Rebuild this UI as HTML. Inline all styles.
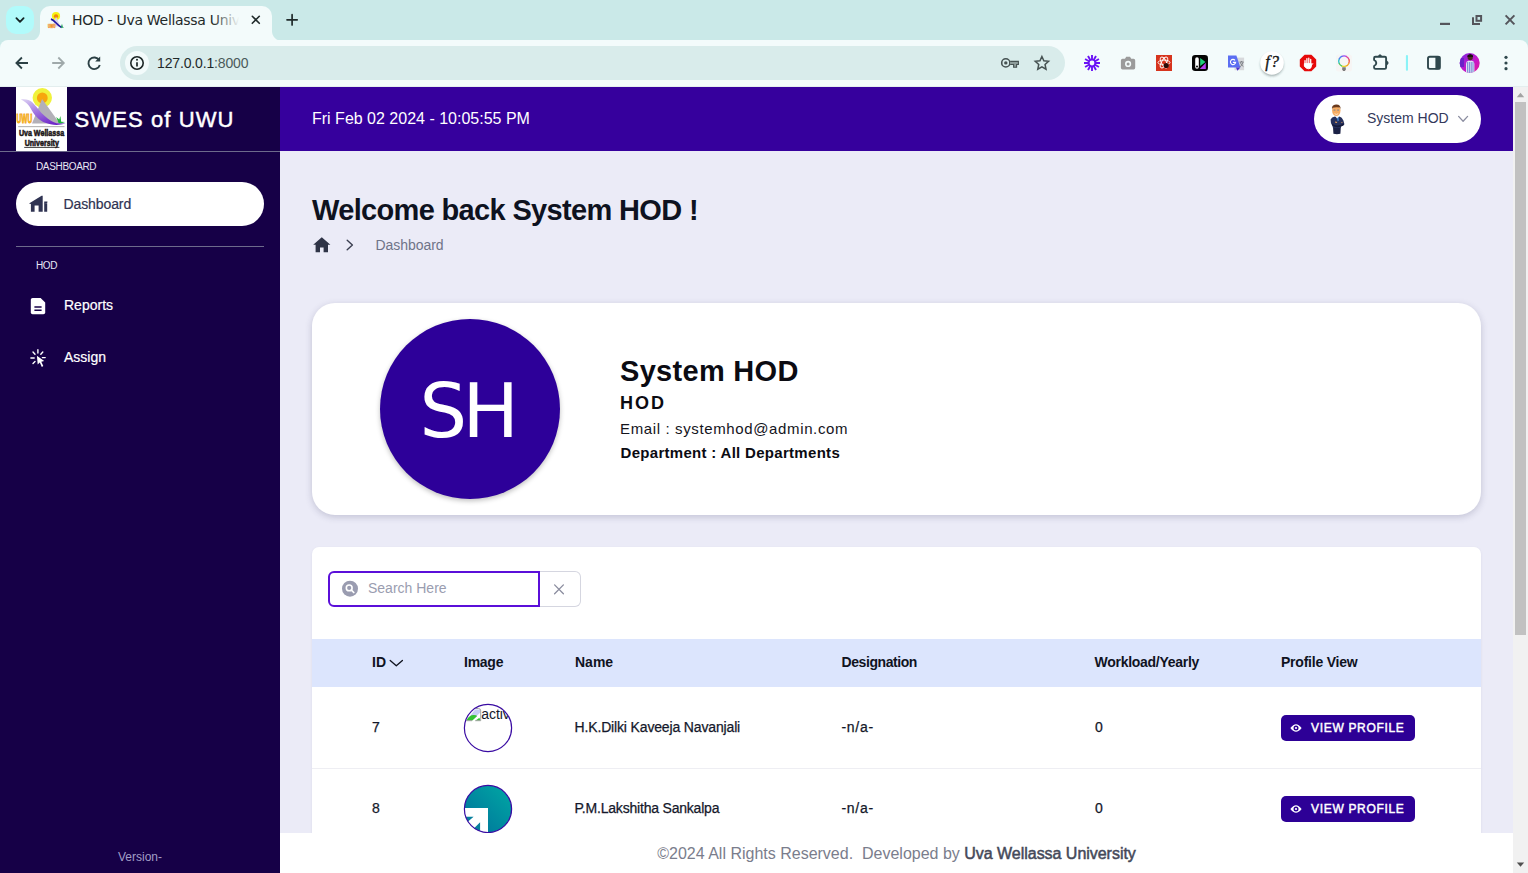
<!DOCTYPE html>
<html lang="en">
<head>
<meta charset="utf-8">
<title>HOD - Uva Wellassa University</title>
<style>
*{box-sizing:border-box;margin:0;padding:0}
html,body{width:1528px;height:873px;overflow:hidden;background:#ebebf7;font-family:"Liberation Sans",sans-serif;color:#111}
.abs{position:absolute}
#stage{position:relative;width:1528px;height:873px;overflow:hidden}
/* ---------- browser chrome ---------- */
#tabstrip{left:0;top:0;width:1528px;height:52px;background:#cae9e8}
#toolbar{left:0;top:40px;width:1528px;height:47px;background:#f3fbfb;border-radius:8px 8px 0 0;border-bottom:1px solid #e3eeee}
#tabsearch{left:6px;top:6px;width:28px;height:28px;border-radius:10px;background:#b1fbfb}
#tab{left:40px;top:6px;width:232px;height:35px;background:#f3fbfb;border-radius:10px 10px 0 0}
#tab:before,#tab:after{content:"";position:absolute;bottom:0;width:10px;height:10px}
#tab:before{left:-10px;background:radial-gradient(circle at 0 0,rgba(0,0,0,0) 9.5px,#f3fbfb 10.5px)}
#tab:after{right:-10px;background:radial-gradient(circle at 100% 0,rgba(0,0,0,0) 9.5px,#f3fbfb 10.5px)}
.ui{font-family:"DejaVu Sans","Liberation Sans",sans-serif}
#tabtitle{left:72px;top:10.2px;width:170px;height:20px;font-size:14px;line-height:20px;color:#1f2a2a;white-space:nowrap;overflow:hidden;letter-spacing:-0.3px}
#tabfade{left:212px;top:8px;width:32px;height:26px;background:linear-gradient(90deg,rgba(243,251,251,0),#f3fbfb 85%)}
#urlbar{left:120px;top:46px;width:945px;height:34px;border-radius:17px;background:#d9eceb}
#infoc{left:125px;top:51px;width:24px;height:24px;border-radius:12px;background:#f3fbfb}
#url{left:157px;top:53px;font-size:14px;line-height:20px;color:#1f2a2a;letter-spacing:-0.15px}
#url span{color:#4b5a5a}
/* ---------- app ---------- */
#sidebar{left:0;top:87px;width:280px;height:786px;background:#160047}
#sidehead{left:0;top:87px;width:280px;height:65px;border-bottom:1px solid #6d6a8c}
#logo{left:16px;top:87px;width:51px;height:64px;background:#fff;overflow:hidden}
#brand{left:74.5px;top:105px;font-size:22px;line-height:30px;color:#fff;font-weight:400;white-space:nowrap;letter-spacing:1.1px;-webkit-text-stroke:.45px #fff}
.slabel{font-size:10px;line-height:12px;color:#e8e6f3;white-space:nowrap;letter-spacing:-.35px}
#pill{left:16px;top:182px;width:248px;height:44px;border-radius:22px;background:#fff}
.sitem{font-size:14px;line-height:20px;white-space:nowrap;-webkit-text-stroke:.2px currentColor}
#sdiv{left:16px;top:246px;width:248px;height:1px;background:#6d6a8c}
#version{left:0;top:850px;width:280px;text-align:center;font-size:12px;line-height:14px;color:#a29ec6}
#topbar{left:280px;top:87px;width:1233px;height:64px;background:#36009d}
#date{left:312px;top:108px;font-size:16px;line-height:22px;color:#fff;white-space:nowrap}
#userpill{left:1314px;top:95px;width:167px;height:48px;border-radius:24px;background:#fff}
#uname{left:1367px;top:108px;font-size:14px;line-height:20px;color:#33395b;white-space:nowrap}
#content{left:280px;top:151px;width:1233px;height:682px;background:#ebebf7}
#h1{left:312px;top:191px;font-size:29px;line-height:38px;font-weight:700;color:#0e1220;white-space:nowrap;letter-spacing:-0.66px}
#crumb{left:375.5px;top:236px;letter-spacing:-.05px;font-size:14px;line-height:18px;color:#6f7488;white-space:nowrap}
#card1{left:312px;top:303px;width:1169px;height:212px;border-radius:23px;background:#fff;box-shadow:0 2px 7px rgba(50,50,90,.22)}
#bigav{left:380px;top:319px;width:180px;height:180px;border-radius:50%;background:#2d0099;box-shadow:0 2px 5px rgba(0,0,0,.25)}
#sh{left:377px;top:371px;width:180px;text-align:center;font-size:75px;line-height:80px;color:#fff;font-family:"DejaVu Sans","Liberation Sans",sans-serif;font-weight:400;letter-spacing:-4.5px}
#pname{left:620px;top:352px;font-size:29px;line-height:38px;font-weight:700;color:#0b0b12;white-space:nowrap;letter-spacing:.3px}
#prole{left:620px;top:391px;font-size:18px;line-height:24px;font-weight:700;color:#0b0b12;letter-spacing:2px;white-space:nowrap}
#pmail{left:620px;top:419px;font-size:15px;line-height:20px;color:#14141c;white-space:nowrap;letter-spacing:.63px}
#pdept{left:620.5px;top:443px;font-size:15px;line-height:20px;font-weight:700;color:#0b0b12;white-space:nowrap;letter-spacing:.3px}
#card2{left:312px;top:547px;width:1169px;height:300px;background:#fff;border-radius:7px;box-shadow:0 1px 3px rgba(50,50,90,.08)}
#search{left:328px;top:571px;width:212px;height:36px;border:2px solid #5b0fd9;border-radius:6px 0 0 6px;background:#fff}
#sph{left:368px;top:579px;font-size:14px;line-height:18px;color:#9a9db0;white-space:nowrap}
#clear{left:540px;top:571px;width:41px;height:36px;border:1px solid #d5d6e0;border-left:0;border-radius:0 6px 6px 0;background:#fff}
#thead{left:312px;top:639px;width:1169px;height:48px;background:#dce5fd}
.th{top:653px;font-size:14px;line-height:18px;font-weight:700;color:#10131f;white-space:nowrap}
.td{font-size:14px;line-height:18px;color:#14182a;white-space:nowrap;-webkit-text-stroke:.25px #14182a}
#rowline{left:312px;top:768px;width:1169px;height:1px;background:#eeeef3}
.rav{width:48px;height:48px;border-radius:50%;overflow:hidden;background:#fff}
.btn{width:134px;height:26px;border-radius:5px;background:#2d0096}
.btxt{font-size:12px;line-height:16px;font-weight:400;color:#fff;letter-spacing:.68px;white-space:nowrap;-webkit-text-stroke:.45px #fff}
#footer{left:280px;top:833px;width:1233px;height:40px;background:#fff}
#ftxt{left:280px;top:842.5px;width:1233px;text-align:center;font-size:16px;line-height:22px;color:#7a7d8c;white-space:pre;letter-spacing:0}
#ftxt b{color:#454959;font-weight:400;-webkit-text-stroke:.5px #454959;letter-spacing:-.03px}
#sbar{left:1513px;top:87px;width:15px;height:786px;background:#f1f1f1}
#sthumb{left:1515px;top:102px;width:11px;height:533px;background:#c1c1c1}
</style>
</head>
<body>
<div id="stage">
<!-- CHROME -->
<div id="tabstrip" class="abs"></div>
<div id="toolbar" class="abs"></div>
<div id="tabsearch" class="abs"></div>
<div id="tab" class="abs"></div>
<div id="tabtitle" class="m abs ui">HOD - Uva Wellassa University</div>
<div id="tabfade" class="abs"></div>
<div id="urlbar" class="abs"></div>
<div id="infoc" class="abs"></div>
<div id="url" class="m abs">127.0.0.1<span>:8000</span></div>
<svg class="abs" style="left:0;top:0" width="1528" height="87" viewBox="0 0 1528 87">
<!-- tab search chevron -->
<path d="M16.4 18.2 L20 21.8 L23.6 18.2" fill="none" stroke="#152424" stroke-width="1.8" stroke-linecap="round" stroke-linejoin="round"/>
<!-- favicon -->
<g id="favicon">
<circle cx="56" cy="16" r="4.1" fill="#f6f214"/><circle cx="56" cy="16.3" r="2.1" fill="#f0820a"/>
<path d="M56 16.6 L60.4 26.4 L52.6 26.4 Z" fill="#d9d5e6"/>
<path d="M50.9 19.2 C54.6 19.8 56 24.6 61.6 27.4" fill="none" stroke="#1f14a4" stroke-width="1.7"/>
<text x="48" y="27.7" font-family="Liberation Sans, sans-serif" font-weight="700" font-size="5.4" fill="#f0902a" stroke="#f0902a" stroke-width=".5" textLength="7.4" lengthAdjust="spacingAndGlyphs">UWU</text>
<path d="M60.6 27.8 L62 23.8 L62.8 26.8 L63.9 27.8 Z" fill="#1f9a5a"/>
</g>
<!-- tab close -->
<path d="M252.3 16.3 L259.3 23.3 M259.3 16.3 L252.3 23.3" stroke="#1f2a2a" stroke-width="1.6" stroke-linecap="round"/>
<!-- new tab -->
<path d="M287 19.8 H297.2 M292.1 14.7 V24.9" stroke="#1f2a2a" stroke-width="1.7" stroke-linecap="round"/>
<!-- window controls -->
<path d="M1440 23.9 H1450" stroke="#54555b" stroke-width="2.2"/>
<rect x="1476.5" y="16" width="4.6" height="4.8" fill="none" stroke="#54555b" stroke-width="2"/>
<path d="M1473 17.3 V23.9 H1480" fill="none" stroke="#54555b" stroke-width="2"/>
<path d="M1505.6 15.4 L1514.4 24.4 M1514.4 15.4 L1505.6 24.4" stroke="#54555b" stroke-width="2"/>
<!-- back -->
<path d="M28 63 H17 M21.9 57.5 L16.4 63 L21.9 68.5" fill="none" stroke="#2b4044" stroke-width="1.8" stroke-linejoin="miter"/>
<!-- forward (disabled) -->
<path d="M52.2 63 H63.2 M58.3 57.5 L63.8 63 L58.3 68.5" fill="none" stroke="#9fa9aa" stroke-width="1.8"/>
<!-- reload -->
<path d="M99.2 60.2 A5.8 5.8 0 1 0 99.8 65" fill="none" stroke="#2b4044" stroke-width="1.9"/>
<path d="M100.2 56.6 V61.6 H95.2 Z" fill="#2b4044"/>
<!-- info icon -->
<circle cx="137" cy="63" r="6.2" fill="none" stroke="#1c2626" stroke-width="1.6"/>
<path d="M137 62.2 V66.4" stroke="#1c2626" stroke-width="1.7"/><circle cx="137" cy="59.8" r="1" fill="#1c2626"/>
<!-- key -->
<circle cx="1005.8" cy="62.9" r="4.1" fill="none" stroke="#465252" stroke-width="1.6"/><circle cx="1005.8" cy="62.9" r="1.7" fill="#465252"/>
<path d="M1010.2 61.4 H1018.4 V64.5 H1016.6 V67.2 H1013.6 V64.5 H1010.2" fill="#8d9c9a" stroke="#465252" stroke-width="1.1"/>
<!-- star -->
<path d="M1041.90 56.50 L1043.84 60.83 L1048.56 61.34 L1045.04 64.52 L1046.01 69.16 L1041.90 66.80 L1037.79 69.16 L1038.76 64.52 L1035.24 61.34 L1039.96 60.83 Z" fill="none" stroke="#465252" stroke-width="1.5" stroke-linejoin="miter"/>
<!-- loom asterisk -->
<path d="M1084.00 63.00 L1100.00 63.00 M1085.07 59.00 L1098.93 67.00 M1088.00 56.07 L1096.00 69.93 M1092.00 55.00 L1092.00 71.00 M1096.00 56.07 L1088.00 69.93 M1098.93 59.00 L1085.07 67.00" stroke="#6a12f5" stroke-width="1.9"/>
<circle cx="1092" cy="63" r="3.9" fill="#6a12f5"/><circle cx="1092" cy="63" r="2.4" fill="#f3fbfb"/>
<!-- camera -->
<path d="M1122.5 58.8 H1125 L1126.2 56.8 H1130 L1131.2 58.8 H1133.6 Q1135.2 58.8 1135.2 60.4 V67.8 Q1135.2 69.4 1133.6 69.4 H1122.5 Q1120.9 69.4 1120.9 67.8 V60.4 Q1120.9 58.8 1122.5 58.8 Z" fill="#9b9b9b"/>
<circle cx="1128.1" cy="63.9" r="3.1" fill="#f3fbfb"/><circle cx="1128.1" cy="63.9" r="1.5" fill="#9b9b9b"/>
<!-- red react ext -->
<rect x="1156" y="55" width="16" height="16" fill="#d6341d"/>
<g fill="none" stroke="#fff" stroke-width="0.9"><ellipse cx="1164" cy="62.5" rx="6" ry="2.4"/><ellipse cx="1164" cy="62.5" rx="6" ry="2.4" transform="rotate(60 1164 62.5)"/><ellipse cx="1164" cy="62.5" rx="6" ry="2.4" transform="rotate(120 1164 62.5)"/></g>
<circle cx="1166.2" cy="65.5" r="2.6" fill="#2a0c08"/>
<!-- black ext -->
<rect x="1192" y="55" width="16" height="16" rx="3.2" fill="#050505"/>
<rect x="1195.2" y="57.3" width="3.6" height="11.4" rx="1.8" fill="#fff"/>
<path d="M1200.2 58 L1205.5 62 L1200.2 66 Z" fill="#1fd07a"/><path d="M1205.8 62.8 V69 H1199.8 Z" fill="#b53cf0"/>
<circle cx="1197" cy="66.6" r="1" fill="#050505"/>
<!-- translate -->
<rect x="1234.5" y="57.6" width="9.6" height="12.6" fill="#d7d9dc"/>
<path d="M1228 55.4 H1236.4 L1240.4 67.4 H1228 Z" fill="#5b6ef2"/>
<path d="M1236 67.4 H1240.4 L1237.4 70.8 Z" fill="#4a2fd0"/>
<path d="M1235 60.3 A2.6 2.6 0 1 0 1235.6 62.4 H1232.9" fill="none" stroke="#fff" stroke-width="1.1"/>
<path d="M1239.6 62 H1243.6 M1241.6 61 V62 M1240.3 62.3 Q1241 65 1243.4 66.6 M1243 62.3 Q1242.4 65 1239.8 67" fill="none" stroke="#6b7075" stroke-width=".8"/>
<!-- f? -->
<filter id="bl" x="-50%" y="-50%" width="200%" height="200%"><feGaussianBlur stdDeviation="1.3"/></filter><circle cx="1272" cy="64.6" r="11.6" fill="rgba(40,60,60,.38)" filter="url(#bl)"/>
<circle cx="1272" cy="63" r="11.8" fill="#fff"/>
<text x="1272.6" y="67.4" text-anchor="middle" font-family="Liberation Serif, DejaVu Serif, serif" font-style="italic" font-weight="400" font-size="16.5" fill="#161616" letter-spacing="1" stroke="#161616" stroke-width=".35">f?</text>
<!-- adblock -->
<path d="M1304.6 54.8 H1311.4 L1316.2 59.6 V66.4 L1311.4 71.2 H1304.6 L1299.8 66.4 V59.6 Z" fill="#e60a0a"/>
<path d="M1305 66.2 V60.6 M1306.9 65 V58.6 M1308.8 65 V58.2 M1310.7 65 V59.4" stroke="#fff" stroke-width="1.3" stroke-linecap="round"/>
<path d="M1304.4 63.6 H1311.4 V66.2 Q1311.2 68.8 1308.4 68.8 Q1305.8 68.8 1304.4 66 Z M1311.2 65.8 L1313 63.2" fill="#fff" stroke="#fff" stroke-width=".9" stroke-linejoin="round"/>
<!-- color bulb -->
<rect x="1336" y="54.6" width="16" height="16.8" rx="2.5" fill="#f6f5f4"/>
<g fill="none" stroke-width="1.35">
<path d="M1341.97 56.30 A5.3 5.3 0 0 1 1346.36 56.46" stroke="#9a4cf2"/>
<path d="M1346.03 56.30 A5.3 5.3 0 0 1 1349.03 59.52" stroke="#e0409a"/>
<path d="M1348.90 59.17 A5.3 5.3 0 0 1 1348.74 63.56" stroke="#f0503a"/>
<path d="M1348.90 63.23 A5.3 5.3 0 0 1 1345.68 66.23" stroke="#f5a623"/>
<path d="M1346.03 66.10 A5.3 5.3 0 0 1 1341.64 65.94" stroke="#e8d82a"/>
<path d="M1341.97 66.10 A5.3 5.3 0 0 1 1338.97 62.88" stroke="#4cc95a"/>
<path d="M1339.10 63.23 A5.3 5.3 0 0 1 1339.26 58.84" stroke="#2fc0c8"/>
<path d="M1339.10 59.17 A5.3 5.3 0 0 1 1342.32 56.17" stroke="#4a7cf0"/>
</g>
<path d="M1342.2 67.2 H1345.8 V69.6 L1344.9 70.9 H1343.1 L1342.2 69.6 Z" fill="#7d7d7d"/>
<!-- puzzle -->
<path d="M1375.4 56.8 H1384.8 Q1386.1 56.8 1386.1 58.1 V67.6 Q1386.1 68.9 1384.8 68.9 H1375.4 Q1374.1 68.9 1374.1 67.6 V66 Q1376.3 65 1376.3 63 Q1376.3 61 1374.1 60 V58.1 Q1374.1 56.8 1375.4 56.8 Z" fill="none" stroke="#2f484d" stroke-width="1.9" stroke-linejoin="round"/>
<path d="M1378 56 Q1380 52.6 1382 56 Z" fill="#2f484d"/><path d="M1386.8 60.6 Q1390.4 63 1386.8 65.4 Z" fill="#2f484d"/>
<!-- separator -->
<rect x="1405.9" y="55" width="2.1" height="15.7" rx="1" fill="#8af3f7"/>
<!-- side panel -->
<rect x="1428" y="56.8" width="11.8" height="12.1" rx="1.8" fill="none" stroke="#2f484d" stroke-width="1.9"/>
<rect x="1435.4" y="56.4" width="4.9" height="13" fill="#2f484d"/>
<!-- profile -->
<defs><clipPath id="pc"><circle cx="1469.7" cy="63" r="10"/></clipPath>
<linearGradient id="pg" x1="0" y1="0" x2="1" y2="1"><stop offset="0" stop-color="#7a2be0"/><stop offset=".55" stop-color="#c318c9"/><stop offset="1" stop-color="#e8179a"/></linearGradient></defs>
<circle cx="1469.7" cy="63" r="10" fill="url(#pg)"/>
<g clip-path="url(#pc)">
<rect x="1459" y="58" width="5" height="9" fill="#6a21c8"/>
<path d="M1466 73 V63.8 Q1466 61.2 1468.4 60.8 H1472 Q1474.4 61.2 1474.4 63.8 V73 Z" fill="#dfe3f3"/>
<path d="M1467.6 62 V73 M1469.4 62 V73 M1471.2 62 V73 M1473 62 V73" stroke="#4763c9" stroke-width=".7"/>
<circle cx="1470.2" cy="57.6" r="2.6" fill="#4a2a22"/>
<path d="M1467.4 55.6 Q1470.2 52.6 1473 55.6 V57 H1467.4 Z" fill="#1a1010"/>
</g>
<!-- menu dots -->
<circle cx="1506" cy="57.3" r="1.6" fill="#2f484d"/><circle cx="1506" cy="63" r="1.6" fill="#2f484d"/><circle cx="1506" cy="68.7" r="1.6" fill="#2f484d"/>
</svg>
<!-- APP -->
<div id="sidebar" class="abs"></div>
<div id="sidehead" class="abs"></div>
<div id="logo" class="abs"></div>
<div id="brand" class="m abs">SWES of UWU</div>
<div class="m abs slabel" style="left:36px;top:161px">DASHBOARD</div>
<div id="pill" class="abs"></div>
<div class="m abs sitem" style="left:63.5px;top:194px;color:#2f3352;letter-spacing:-.1px">Dashboard</div>
<div id="sdiv" class="abs"></div>
<div class="m abs slabel" style="left:36px;top:260px">HOD</div>
<div class="m abs sitem" style="left:64px;top:295px;color:#fff">Reports</div>
<div class="m abs sitem" style="left:64px;top:347px;color:#fff">Assign</div>
<div id="version" class="m abs">Version-</div>
<div id="topbar" class="abs"></div>
<div id="date" class="m abs">Fri Feb 02 2024 - 10:05:55 PM</div>
<div id="userpill" class="abs"></div>
<div id="uname" class="m abs">System HOD</div>
<div id="content" class="abs"></div>
<div id="h1" class="m abs">Welcome back System HOD !</div>
<div id="crumb" class="m abs">Dashboard</div>
<div id="card1" class="abs"></div>
<div id="bigav" class="abs"></div>
<div id="sh" class="m abs">SH</div>
<div id="pname" class="m abs">System HOD</div>
<div id="prole" class="m abs">HOD</div>
<div id="pmail" class="m abs">Email : systemhod@admin.com</div>
<div id="pdept" class="m abs">Department : All Departments</div>
<div id="card2" class="abs"></div>
<div id="search" class="abs"></div>
<div id="sph" class="m abs">Search Here</div>
<div id="clear" class="abs"></div>
<div id="thead" class="abs"></div>
<div class="m abs th" style="left:372px">ID</div>
<div class="m abs th" style="left:464px;letter-spacing:-.25px">Image</div>
<div class="m abs th" style="left:575px">Name</div>
<div class="m abs th" style="left:841.5px;letter-spacing:-.42px">Designation</div>
<div class="m abs th" style="left:1094.5px;letter-spacing:-.27px">Workload/Yearly</div>
<div class="m abs th" style="left:1281px;letter-spacing:-.22px">Profile View</div>
<div class="m abs td" style="left:372px;top:718px">7</div>
<div class="abs rav" style="left:464px;top:704px"></div>
<div class="m abs td" style="left:574.5px;top:718px;letter-spacing:-.15px">H.K.Dilki Kaveeja Navanjali</div>
<div class="m abs td" style="left:841.5px;top:718px;letter-spacing:.7px">-n/a-</div>
<div class="m abs td" style="left:1095px;top:718px">0</div>
<div class="abs btn" style="left:1281px;top:715px"></div>
<div class="m abs btxt" style="left:1311px;top:720px">VIEW PROFILE</div>
<div id="rowline" class="abs"></div>
<div class="m abs td" style="left:372px;top:799px">8</div>
<div class="abs rav" style="left:464px;top:785px"></div>
<div class="m abs td" style="left:574.5px;top:799px;letter-spacing:-.2px">P.M.Lakshitha Sankalpa</div>
<div class="m abs td" style="left:841.5px;top:799px;letter-spacing:.7px">-n/a-</div>
<div class="m abs td" style="left:1095px;top:799px">0</div>
<div class="abs btn" style="left:1281px;top:796px"></div>
<div class="m abs btxt" style="left:1311px;top:801px">VIEW PROFILE</div>
<svg class="abs" style="left:0;top:0" width="1528" height="873" viewBox="0 0 1528 873">
<defs>
<clipPath id="lc"><rect x="16" y="87" width="51" height="64"/></clipPath>
<clipPath id="a1"><circle cx="488" cy="728" r="23.4"/></clipPath>
<clipPath id="a2"><circle cx="488" cy="809" r="23.6"/></clipPath>
<linearGradient id="teal" x1="1" y1="0" x2="0" y2="1"><stop offset="0" stop-color="#00a9a4"/><stop offset="1" stop-color="#006f9a"/></linearGradient>
<linearGradient id="swoosh" x1="0.1" y1="0" x2=".75" y2="1"><stop offset="0" stop-color="#d9ccf2"/><stop offset=".45" stop-color="#a278e0"/><stop offset="1" stop-color="#6a1fc6"/></linearGradient>
</defs>
<!-- logo -->
<g clip-path="url(#lc)">
<circle cx="42.3" cy="97.8" r="9.7" fill="#f0f23c"/><circle cx="42.3" cy="97.9" r="5.4" fill="#f7a60e"/>
<path d="M42.1 99 L59.8 123.4 L32 123.6 Z" fill="#b3b0b8"/>
<path d="M20.9 99.4 C25 98.6 29.5 99.6 32.5 102.4 C36.5 106.2 40 112 45 116.2 C49 119.6 53 122.4 56.7 123.2 L65.7 123.6 C60 125.2 55 125.2 50.5 124.3 C46.5 123.4 43.8 122.6 41.2 120.8 C37.6 118.4 35.6 116 33.4 113 C31.2 109.6 30 106.6 27.9 104.5 C26 102.4 23.6 100.6 20.9 99.4 Z" fill="url(#swoosh)"/>
<path d="M56.2 117 L59.2 119.4 L60.4 116 L61.2 121.8 L65.2 122 L60.8 123.6 L58.6 123 Z" fill="#23b53c"/>
<text x="16.5" y="123.4" font-family="Liberation Sans, sans-serif" font-weight="700" font-size="12.8" fill="#f5b21a" stroke="#f0940e" stroke-width=".8" paint-order="stroke" textLength="15.6" lengthAdjust="spacingAndGlyphs">UWU</text>
<rect x="18.2" y="126.4" width="46.3" height=".7" fill="#8c8a8a"/>
<text x="18.9" y="135.5" font-family="Liberation Sans, sans-serif" font-weight="700" font-size="8.5" fill="#1d1718" stroke="#1d1718" stroke-width=".55" textLength="45.2" lengthAdjust="spacingAndGlyphs">Uva Wellassa</text>
<text x="24.7" y="145.7" font-family="Liberation Sans, sans-serif" font-weight="700" font-size="8.5" fill="#1d1718" stroke="#1d1718" stroke-width=".55" textLength="34.2" lengthAdjust="spacingAndGlyphs">University</text>
<rect x="24.2" y="146.9" width="35.2" height=".9" fill="#2a2626"/>
</g>
<!-- dashboard icon -->
<path d="M29 203.6 L41.6 195.8 H42.7 V211.8 H38.6 V205.6 H34.6 V211.8 H30.9 V203.9 Z" fill="#2f3352"/>
<path d="M44.2 201.6 H47.2 V211.8 H44.2 Z M43.6 203.2 L47.3 201.2 V203 Z" fill="#2f3352"/>
<!-- reports icon -->
<path d="M32.6 298 H40.6 L45.2 302.6 V312.4 Q45.2 314.2 43.4 314.2 H32.6 Q30.8 314.2 30.8 312.4 V299.8 Q30.8 298 32.6 298 Z" fill="#fff"/>
<path d="M34.4 306.9 H41.6 M34.4 310.2 H41.6" stroke="#160047" stroke-width="1.5"/>
<!-- assign icon -->
<path d="M36.9 355.8 L44.2 361 L41.3 361.7 L43.3 366.1 L41.8 366.9 L39.8 362.6 L37.7 364.6 Z" fill="#fff"/>
<path d="M37.9 349.8 V353 M33 352 L35 354.2 M42.8 352 L40.8 354.2 M30.9 358 H34.2 M42.4 357.6 H45.2 M33 363.6 L35 361.6" stroke="#fff" stroke-width="1.4" stroke-linecap="round"/>
<!-- user avatar -->
<g id="man">
<path d="M1333 127 H1340.8 L1340.4 133.8 Q1337 134.6 1333.4 133.8 Z" fill="#1a2145"/>
<path d="M1330.6 119.4 Q1331.6 117 1335 116.6 L1339.4 116.6 Q1342 117.4 1343.4 120.4 L1344.4 124.2 Q1343.4 126 1340.8 126.6 L1340.8 128 H1333 L1332.6 126.4 Q1330.4 123.6 1330.6 119.4 Z" fill="#25305c"/>
<path d="M1331.8 123.4 Q1337 127.8 1343.6 123.2 L1343.8 125 Q1337.4 129.4 1332.2 125.2 Z" fill="#151b3b"/>
<path d="M1336.6 116.8 L1338.6 116.8 L1339 120.6 L1337.6 121.6 Z" fill="#3a7bc8"/>
<path d="M1335 116 L1337 118.4 L1339.6 116 L1338 115.2 H1336.2 Z" fill="#f4f6fb"/>
<path d="M1335.2 121.4 L1337.4 122 L1336.6 122.9 L1335 122.6 Z M1341 122.4 L1342.2 121.8 L1342.4 123 Z" fill="#f2a65c"/>
<ellipse cx="1336.3" cy="110.6" rx="4.2" ry="5.4" fill="#f6ac62"/>
<path d="M1332 109.4 Q1331.2 104.8 1336 104.4 Q1341 104.2 1340.6 109.4 L1340 107.6 Q1336 106.6 1332.6 107.8 Z" fill="#6a3a1c"/>
<path d="M1334.4 113.2 Q1336.4 114.6 1338.4 113.2 L1338 114 Q1336.4 115 1334.8 114 Z" fill="#fff"/>
<rect x="1333.6" y="109.6" width="1.8" height=".9" fill="#6b7f9a"/><rect x="1337.2" y="109.6" width="1.8" height=".9" fill="#6b7f9a"/>
</g>
<path d="M1458.6 116.4 L1463.1 121.3 L1467.6 116.4" fill="none" stroke="#8b8da0" stroke-width="1.3" stroke-linecap="round" stroke-linejoin="round"/>
<!-- breadcrumb -->
<path d="M321.8 237.2 L330.4 244.8 H328 V252.2 H323.6 V247.4 H320 V252.2 H315.6 V244.8 H313.2 Z" fill="#2f3447"/>
<path d="M347.2 240.2 L352.4 245 L347.2 249.8" fill="none" stroke="#3b3f50" stroke-width="1.4" stroke-linecap="round" stroke-linejoin="round"/>
<!-- search icon -->
<circle cx="350" cy="588.7" r="8" fill="#9a9cb0"/>
<circle cx="349.2" cy="587.9" r="2.9" fill="none" stroke="#fff" stroke-width="1.6"/>
<path d="M351.4 590.1 L353.8 592.5" stroke="#fff" stroke-width="1.7" stroke-linecap="round"/>
<!-- clear x -->
<path d="M554.6 584.9 L563.4 593.7 M563.4 584.9 L554.6 593.7" stroke="#8a8c9e" stroke-width="1.3" stroke-linecap="round"/>
<!-- ID chevron -->
<path d="M390.2 660.4 L396.3 665.8 L402.4 660.4" fill="none" stroke="#10131f" stroke-width="1.3" stroke-linecap="round" stroke-linejoin="round"/>
<!-- avatar 1 : broken image + alt -->
<g clip-path="url(#a1)">
<path d="M467.4 719.2 L475.2 709.6 H480.3 V712.6 L473.4 719.2 Z" fill="#c5cdf4"/>
<path d="M466.4 720.4 Q469.4 714.6 474 714.9 Q476.2 715 477.2 716 L472.4 720.4 Z" fill="#34c233"/>
<path d="M475.6 720.4 L479.4 717.8 L480.4 720.4 Z" fill="#34c233"/>
<path d="M475.4 708.5 H478.6 Q480.7 708.6 480.7 710.8 V720.7 H475.2 M466.4 720.7 H472" fill="none" stroke="#9b9b9b" stroke-width=".9"/>
<text x="481.3" y="718.9" font-family="Liberation Sans, sans-serif" font-size="14" fill="#14182a" letter-spacing="-.1">active</text>
</g>
<circle cx="488" cy="728" r="23.6" fill="none" stroke="#3a0ca3" stroke-width="1.2"/>
<!-- avatar 2 : teal -->
<g clip-path="url(#a2)">
<rect x="464" y="785" width="48" height="48" fill="url(#teal)"/>
<rect x="462" y="808" width="26" height="27" fill="#fff"/>
<path d="M473.6 816.7 H460 V828.3 Z M480.1 822.2 V836 H466.3 Z" fill="#077f9d"/>
</g>
<circle cx="488" cy="809" r="23.6" fill="none" stroke="#3a0ca3" stroke-width="1.2"/>
<!-- eyes -->
<g id="eye1">
<path d="M1290.4 728 Q1296 720.4 1301.6 728 Q1296 735.6 1290.4 728 Z" fill="#fff"/>
<circle cx="1296" cy="728" r="2.5" fill="#2d0096"/><circle cx="1296" cy="728" r="1.1" fill="#fff"/>
</g>
<g id="eye2">
<path d="M1290.4 809 Q1296 801.4 1301.6 809 Q1296 816.6 1290.4 809 Z" fill="#fff"/>
<circle cx="1296" cy="809" r="2.5" fill="#2d0096"/><circle cx="1296" cy="809" r="1.1" fill="#fff"/>
</g>
</svg>
<div id="footer" class="abs"></div>
<div id="ftxt" class="m abs">©2024 All Rights Reserved.  Developed by <b>Uva Wellassa University</b></div>
<div id="sbar" class="abs"></div>
<div id="sthumb" class="abs"></div>
<svg class="abs" style="left:1513px;top:87px" width="15" height="786" viewBox="0 0 15 786"><path d="M3.8 10.2 L7.5 5.8 L11.2 10.2 Z" fill="#a3a3a3"/><path d="M3.8 775.4 L7.5 779.8 L11.2 775.4 Z" fill="#505050"/></svg>
</div>
</body>
</html>
